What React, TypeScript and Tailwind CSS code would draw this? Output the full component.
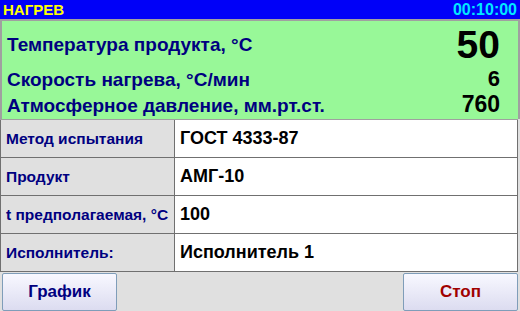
import React from "react";

type InfoRow = {
  label: string;
  value: string;
};

const rows: InfoRow[] = [
  { label: "Метод испытания", value: "ГОСТ 4333-87" },
  { label: "Продукт", value: "АМГ-10" },
  { label: "t предполагаемая, °C", value: "100" },
  { label: "Исполнитель:", value: "Исполнитель 1" },
];

function Button({ children, tone }: { children: React.ReactNode; tone: "blue" | "red" }) {
  return (
    <button
      className={`h-[38px] w-[115px] rounded-[2px] border border-[#7f9db9] bg-gradient-to-b from-[#f8f8ff] to-[#dcdcf0] text-[17px] font-bold ${
        tone === "blue" ? "text-[#000080]" : "text-[#a00000]"
      }`}
    >
      {children}
    </button>
  );
}

export default function App() {
  return (
    <div className="flex h-[311px] w-[520px] flex-col bg-[#e0e0e0] font-['Liberation_Sans',Arial,sans-serif]">
      <div className="flex h-[19px] items-center justify-between bg-[#0000f8] px-[3px] font-bold leading-none">
        <span className="text-[15px] text-[#ffff00]">НАГРЕВ</span>
        <span className="text-[16px] text-[#00e8ff]">00:10:00</span>
      </div>

      <div className="flex h-[100px] flex-col border-x-2 border-t-2 border-[#a0a0a0] bg-[#98f898] pl-[5px] pr-[18px] font-bold leading-none">
        <div className="mt-[4px] flex items-center justify-between">
          <span className="text-[19px] text-[#000080]">Температура продукта, °C</span>
          <span className="text-[39px] text-black">50</span>
        </div>
        <div className="mt-[4px] flex items-baseline justify-between">
          <span className="text-[19px] text-[#000080]">Скорость нагрева, °C/мин</span>
          <span className="text-[22px] text-black">6</span>
        </div>
        <div className="mt-[3px] flex items-baseline justify-between">
          <span className="text-[19px] text-[#000080]">Атмосферное давление, мм.рт.ст.</span>
          <span className="text-[23px] text-black">760</span>
        </div>
      </div>

      <div className="mr-[2px] flex flex-col border-t border-[#a0a0a0]">
        {rows.map((row) => (
          <div key={row.label} className="flex h-[38px] border-b border-[#707070]">
            <div className="flex w-[175px] items-center border-x border-[#707070] bg-[#e0e0e0] pl-[5px] text-[15.5px] font-bold text-[#000080]">
              {row.label}
            </div>
            <div className="flex flex-1 items-center border-r border-[#707070] bg-white pl-[5px] text-[18px] font-bold text-black">
              {row.value}
            </div>
          </div>
        ))}
      </div>

      <div className="flex flex-1 items-center justify-between px-[2px]">
        <Button tone="blue">График</Button>
        <Button tone="red">Стоп</Button>
      </div>
    </div>
  );
}
